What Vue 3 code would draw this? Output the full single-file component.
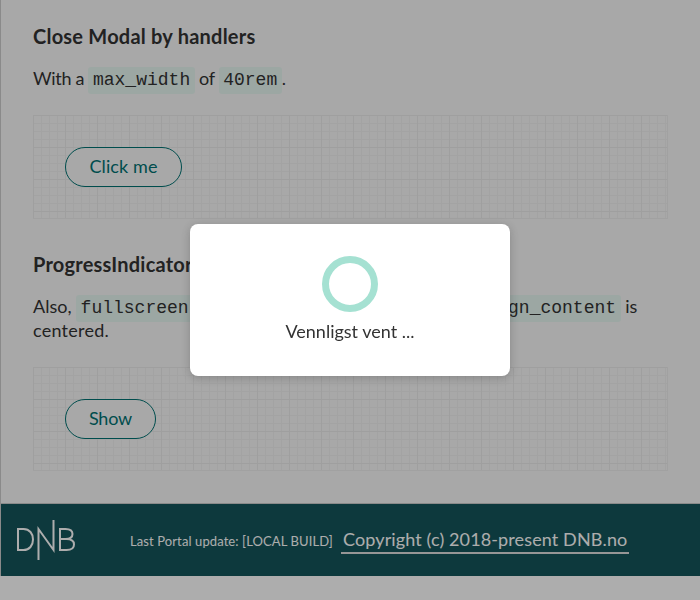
<script setup>
const sections = [
  { id: 'handlers', title: 'Close Modal by handlers', button: 'Click me' },
  { id: 'progress', title: 'ProgressIndicator inside a Modal', button: 'Show' },
]
</script>

<template>
  <div class="page">
    <main class="content">
      <section v-for="s in sections" :key="s.id" class="example">
        <h3>{{ s.title }}</h3>
        <p v-if="s.id === 'handlers'"><span class="tight">With a </span><code>max_width</code><span class="tight"> of </span><code>40rem</code>.</p>
        <p v-else>Also, <code>fullscreen</code><span class="middle"> is set to false and the</span><code>align_content</code> is <span class="loose">centered.</span></p>
        <div class="demo"><button type="button" :class="s.id">{{ s.button }}</button></div>
      </section>
    </main>
    <footer>
      <svg class="logo" width="60" height="42" viewBox="0 0 60 42" fill="none" stroke="#fff" stroke-width="2">
        <path d="M2 10H7.500C13.500 10 17 14.500 17 20.500S13.500 31 7.500 31H2Z" />
        <path d="M22.500 41V10L37.500 31V1" />
        <path d="M44 10H49.500C54 10 56.500 12 56.500 15S54 20 49.500 20H44H50.500C55.500 20 58 22 58 25.500S55.500 31 50.500 31H44Z" />
      </svg>
      <small>Last Portal update: [LOCAL BUILD]</small>
      <a>Copyright (c) 2018-present DNB.no</a>
    </footer>
  </div>
  <div class="overlay">
    <div class="modal" role="dialog">
      <svg width="56" height="56" viewBox="0 0 56 56"><circle cx="28" cy="28" r="24.500" fill="none" stroke="#a5e1d2" stroke-width="7" /></svg>
      <span>Vennligst vent ...</span>
    </div>
  </div>
</template>

<style>
body {
  background: #fff;
}
</style>

<style scoped>
.page {
  box-sizing: border-box;
  height: 576px;
  border-left: 1px solid #ccc;
  background: #f8f8f8;
  color: #333;
  font: 18px/24px Lato, "Liberation Sans", sans-serif;
  display: flex;
  flex-direction: column;
}
.content {
  box-sizing: border-box;
  height: 504px;
  padding: 24px 32px 0;
  border-bottom: 1px solid #ccc;
}
.example {
  margin-bottom: 33px;
}
h3 {
  margin: 0;
  font-size: 20px;
  line-height: 24px;
  font-weight: 700;
  letter-spacing: 0.22px;
}
p {
  margin: 18px 0 25px;
}
.tight {
  letter-spacing: -0.3px;
}
.loose {
  letter-spacing: 0.25px;
}
code {
  font: 18px/0 "Liberation Mono", monospace;
  background: #e6f6f1;
  padding: 3px 4.5px 4px;
  border-radius: 3px;
}
.middle {
  display: inline-block;
  width: 278px;
}
.demo {
  box-sizing: border-box;
  width: 635px;
  height: 104px;
  padding: 32px;
  border: solid #ededed;
  border-width: 0 1px 1px 0;
  background-image:
    linear-gradient(#ebebeb 1px, transparent 1px),
    linear-gradient(90deg, #ebebeb 1px, transparent 1px),
    linear-gradient(#f1f1f1 1px, transparent 1px),
    linear-gradient(90deg, #f1f1f1 1px, transparent 1px);
  background-size: 32px 32px, 32px 32px, 8px 8px, 8px 8px;
}
button {
  box-sizing: border-box;
  display: block;
  height: 40px;
  border: 1px solid #007272;
  border-radius: 20px;
  background: #f8f8f8;
  color: #007272;
  font: inherit;
  padding: 0 0 2px;
  letter-spacing: 0.1px;
}
.handlers {
  width: 117px;
}
.progress {
  width: 91px;
  letter-spacing: -0.2px;
}
footer {
  height: 72px;
  display: flex;
  align-items: center;
  background: #14555a;
  color: #fff;
}
.logo {
  margin-left: 15px;
}
small {
  width: 211px;
  margin: 2px 0 0 54px;
  font-size: 13px;
  line-height: 20px;
  letter-spacing: 0.1px;
  white-space: nowrap;
}
footer a {
  box-sizing: border-box;
  width: 288px;
  height: 26px;
  padding: 0 2px;
  margin-top: 1px;
  line-height: 22px;
  border-bottom: 2px solid #ddd;
  letter-spacing: 0.12px;
  white-space: nowrap;
}
.overlay {
  position: fixed;
  inset: 0;
  display: flex;
  align-items: center;
  justify-content: center;
  background: rgba(0, 0, 0, 0.32);
}
.modal {
  box-sizing: border-box;
  width: 320px;
  height: 152px;
  padding-top: 32px;
  display: flex;
  flex-direction: column;
  align-items: center;
  gap: 7px;
  border-radius: 8px;
  background: #fff;
  box-shadow: 0 2px 10px rgba(51, 51, 51, 0.3);
  color: #333;
  font: 18px/24px Lato, "Liberation Sans", sans-serif;
}
</style>
